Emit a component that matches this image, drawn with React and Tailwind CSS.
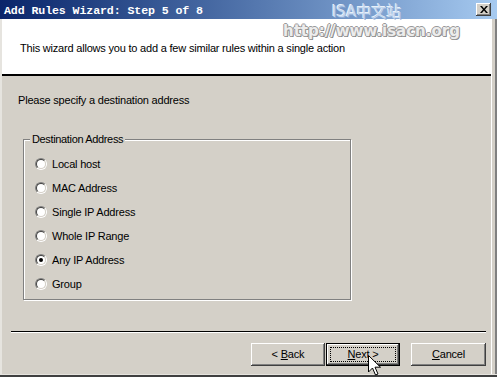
import React from "react";

const face = "font-['Liberation_Sans',Arial,sans-serif]";

function Radio({ checked, label }) {
  return (
    <div className="flex h-[24px] items-center pl-[11px]">
      <div className="h-[12px] w-[12px] rounded-full border border-t-[#808080] border-l-[#808080] border-b-white border-r-white">
        <div className="flex h-full w-full items-center justify-center rounded-full border border-t-[#404040] border-l-[#404040] border-b-[#d4d0c8] border-r-[#d4d0c8] bg-white">
          {checked && <div className="h-[4px] w-[4px] rounded-full bg-black" />}
        </div>
      </div>
      <span className="ml-[5px] leading-[13px]">{label}</span>
    </div>
  );
}

function Button({ children, width, isDefault }) {
  const bevel =
    "shadow-[inset_-1px_-1px_0_#404040,inset_1px_1px_0_#ffffff,inset_-2px_-2px_0_#808080,inset_2px_2px_0_#d4d0c8]";
  return (
    <div
      className={`flex h-[23px] items-center justify-center bg-[#d4d0c8] ${width} ${
        isDefault ? "border border-black" : ""
      }`}
    >
      <div className={`flex h-full w-full items-center justify-center ${bevel}`}>
        {isDefault ? (
          <div className="flex h-[15px] w-[66px] items-center justify-center border border-dotted border-black">
            {children}
          </div>
        ) : (
          children
        )}
      </div>
    </div>
  );
}

export default function App() {
  return (
    <div
      className={`relative flex h-[377px] w-[497px] flex-col overflow-hidden bg-[#d4d0c8] text-[11px] tracking-[-0.2px] text-black ${face}`}
    >
      {/* title bar */}
      <div className="flex h-[19px] w-full shrink-0 items-center justify-between bg-gradient-to-r from-[#0a246a] to-[#a6caf0] pl-[4px] pr-[6px]">
        <span className="pt-[3px] font-['Liberation_Mono',monospace] text-[11.6px] font-bold leading-[14px] tracking-[-0.1px] text-white">
          Add Rules Wizard: Step 5 of 8
        </span>
        <div className="flex h-[13px] w-[15px] items-center justify-center bg-[#d4d0c8] shadow-[inset_-1px_-1px_0_#404040,inset_1px_1px_0_#ffffff,inset_-2px_-2px_0_#808080]">
          <svg width="8" height="7" viewBox="0 0 8 7">
            <path d="M0 0h2l2 2.5L6 0h2L5 3.5 8 7H6L4 4.5 2 7H0l3-3.5z" fill="#000" />
          </svg>
        </div>
      </div>

      <div className="flex flex-1 flex-row">
        <div className="w-[2px] shrink-0 bg-[#e6e4df]" />
        <div className="flex w-[489px] flex-col">
          {/* header */}
          <div className="h-[57px] shrink-0 border-b-2 border-black bg-white pl-[18px] pt-[23px]">
            <p className="leading-[13px]">
              This wizard allows you to add a few similar rules within a single action
            </p>
          </div>

          {/* body */}
          <p className="ml-[16px] mt-[18px] leading-[13px]">Please specify a destination address</p>

          <div className="relative ml-[21px] mt-[32px] h-[161px] w-[328px] border border-[#808080] pt-[12px] shadow-[inset_1px_1px_0_#ffffff,1px_1px_0_#ffffff]">
            <span className="absolute left-[6px] top-[-7px] bg-[#d4d0c8] px-[2px] leading-[13px] tracking-[-0.35px]">
              Destination Address
            </span>
            <Radio label="Local host" />
            <Radio label="MAC Address" />
            <Radio label="Single IP Address" />
            <Radio label="Whole IP Range" />
            <Radio checked label="Any IP Address" />
            <Radio label="Group" />
          </div>

          {/* separator */}
          <div className="ml-[9px] mt-[31px] h-[2px] w-[475px] border-t border-black border-b border-b-[#ffffff]" />

          {/* buttons */}
          <div className="mt-[10px] flex justify-end gap-[1px] pr-[5px]">
            <Button width="w-[74px]">
              <span>
                &lt; <span className="underline">B</span>ack
              </span>
            </Button>
            <Button width="w-[74px]" isDefault>
              <span>
                <span className="underline">N</span>ext &gt;
              </span>
            </Button>
            <div className="w-[9px]" />
            <Button width="w-[75px]">
              <span>
                <span className="underline">C</span>ancel
              </span>
            </Button>
          </div>
        </div>
        <div className="w-[6px] shrink-0 border-l border-l-white bg-[#d4d0c8] border-r-2 border-r-[#808080]" />
      </div>
      <div className="h-[3px] shrink-0 border-t border-t-[#e6e4df] bg-[#404040]" />

      {/* watermark overlay */}
      <span className="absolute left-[332px] top-[2px] font-['DejaVu_Sans','Noto_Sans_CJK_SC',sans-serif] text-[15px] leading-[20px] tracking-[0px] text-[#c4d8ef] [text-shadow:-1px_-1px_0_#e8f0fa,1px_1px_0_#8aa8d4]">
        ISA中文站
      </span>
      <span className="absolute left-[283px] top-[21px] font-['DejaVu_Sans',sans-serif] text-[15px] font-bold leading-[20px] tracking-[0px] text-[#ececec] [text-shadow:1px_0_0_#9a9a9a,-1px_0_0_#9a9a9a,0_1px_0_#9a9a9a,0_-1px_0_#9a9a9a,1px_1px_0_#808080]">
        http://www.isacn.org
      </span>

      {/* mouse cursor */}
      <svg className="absolute left-[368px] top-[355px]" width="13" height="21" viewBox="0 0 13 21">
        <path d="M0.5 0.5V17l4-4 3 7 2.5-1-3-6.8h5.5z" fill="#fff" stroke="#000" strokeWidth="1" strokeLinejoin="miter" />
      </svg>
    </div>
  );
}
